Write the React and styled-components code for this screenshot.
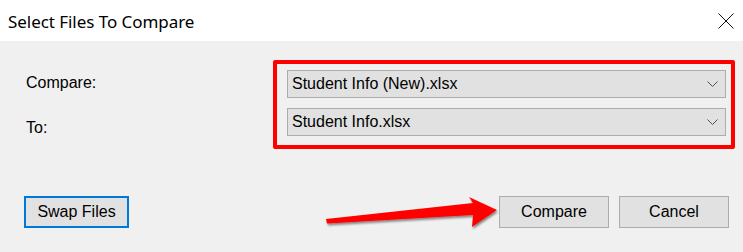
import React from "react";
import styled, { createGlobalStyle } from "styled-components";

const GlobalStyle = createGlobalStyle`
  html, body { margin: 0; padding: 0; background: #f0f0f0; }
  body { font-family: "Liberation Sans", Arial, sans-serif; }
`;

const Dialog = styled.div`
  width: 743px;
  height: 252px;
  display: flex;
  flex-direction: column;
  background: #f0f0f0;
  overflow: hidden;
`;

const TitleBar = styled.div`
  height: 41px;
  background: #ffffff;
  display: flex;
  align-items: center;
  justify-content: space-between;
  padding: 0 9px 0 8px;
  box-sizing: border-box;
`;

const Title = styled.div`
  font-family: "Noto Sans", "Open Sans", sans-serif;
  font-size: 17px;
  color: #000;
  letter-spacing: -0.05px;
  margin-top: 1px;
`;

const CloseButton = styled.button`
  width: 16px;
  height: 16px;
  padding: 0;
  border: none;
  background: transparent;
  display: flex;
`;

const Form = styled.div`
  display: flex;
  padding-top: 19px;
`;

const LabelColumn = styled.div`
  width: 273px;
  box-sizing: border-box;
  padding: 14px 0 0 26px;
  display: flex;
  flex-direction: column;
  gap: 27px;
`;

const Label = styled.div`
  font-size: 16px;
  line-height: 18px;
  color: #000;
`;

const Highlight = styled.div`
  width: 462px;
  height: 89px;
  box-sizing: border-box;
  border: 4px solid #ff0000;
  border-radius: 2px;
  padding: 6px 5px 0 10px;
  display: flex;
  flex-direction: column;
  gap: 10px;
`;

const Combo = styled.div`
  height: 28px;
  box-sizing: border-box;
  border: 1px solid #adadad;
  background: #e1e1e1;
  display: flex;
  align-items: center;
  justify-content: space-between;
  padding: 0 7px 0 4px;
  font-size: 16px;
  line-height: 26px;
  color: #000;
`;

const Footer = styled.div`
  position: relative;
  display: flex;
  align-items: center;
  justify-content: space-between;
  margin-top: 47px;
  padding: 0 14px 0 24px;
`;

const ButtonGroup = styled.div`
  display: flex;
  gap: 10px;
`;

const Button = styled.button`
  width: ${(p) => p.$width}px;
  height: 32px;
  box-sizing: border-box;
  border: ${(p) => (p.$focused ? "2px solid #0078d7" : "1px solid #adadad")};
  background: #e1e1e1;
  font-family: "Liberation Sans", Arial, sans-serif;
  font-size: 16px;
  color: #000;
  padding: 0;
  margin: 0;
`;

const Arrow = styled.svg`
  position: absolute;
  left: 320px;
  top: -4px;
  overflow: visible;
`;

const Chevron = () => (
  <svg width="11" height="6" viewBox="0 0 11 6">
    <path d="M0.5 0.5 L5.5 5.5 L10.5 0.5" fill="none" stroke="#505050" strokeWidth="1" />
  </svg>
);

const CloseIcon = () => (
  <svg width="16" height="16" viewBox="0 0 16 16">
    <path d="M0.5 0.5 L15.5 15.5 M15.5 0.5 L0.5 15.5" stroke="#111" strokeWidth="1" />
  </svg>
);

export default function App() {
  return (
    <>
      <GlobalStyle />
      <Dialog>
        <TitleBar>
          <Title>Select Files To Compare</Title>
          <CloseButton aria-label="Close">
            <CloseIcon />
          </CloseButton>
        </TitleBar>
        <Form>
          <LabelColumn>
            <Label>Compare:</Label>
            <Label>To:</Label>
          </LabelColumn>
          <Highlight>
            <Combo>
              <span>Student Info (New).xlsx</span>
              <Chevron />
            </Combo>
            <Combo>
              <span>Student Info.xlsx</span>
              <Chevron />
            </Combo>
          </Highlight>
        </Form>
        <Footer>
          <Button $width={105} $focused>Swap Files</Button>
          <ButtonGroup>
            <Button $width={110}>Compare</Button>
            <Button $width={110}>Cancel</Button>
          </ButtonGroup>
          <Arrow width="185" height="40" viewBox="0 0 185 40">
            <defs>
              <filter id="shadow" x="-10%" y="-30%" width="130%" height="180%">
                <feDropShadow dx="1" dy="2" stdDeviation="1.2" floodColor="#000" floodOpacity="0.45" />
              </filter>
            </defs>
            <polygon
              points="6,27 153,11 149,5 177,18 152,35 153,23 7,31.5"
              fill="#ff0000"
              filter="url(#shadow)"
            />
          </Arrow>
        </Footer>
      </Dialog>
    </>
  );
}
